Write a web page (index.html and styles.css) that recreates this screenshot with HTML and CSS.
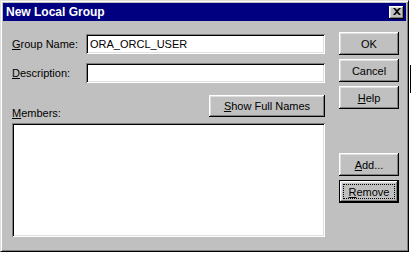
FILE: index.html
```html
<!DOCTYPE html>
<html lang="en">
<head>
  <meta charset="UTF-8">
  <meta name="viewport" content="width=device-width, initial-scale=1.0">
  <title>New Local Group</title>
  <link rel="stylesheet" href="styles.css">
</head>
<body>
  <!-- window behind the dialog, only its edge shows -->
  <div class="behind-edge"></div>

  <div class="window">
    <div class="titlebar">
      <span class="title">New Local Group</span>
      <button class="close-btn" aria-label="Close">
        <svg width="8" height="7" viewBox="0 0 8 7">
          <path d="M0 0h2l2 2 2-2h2L5 3.5 8 7H6L4 5 2 7H0l3-3.5z" fill="#000"/>
        </svg>
      </button>
    </div>

    <div class="dialog-body">
      <div class="main-col">
        <div class="field">
          <label><u>G</u>roup Name:</label>
          <div class="input">ORA_ORCL_USER</div>
        </div>
        <div class="field field-second">
          <label><u>D</u>escription:</label>
          <div class="input"></div>
        </div>
        <div class="members-row">
          <label class="members-label"><u>M</u>embers:</label>
          <button class="btn btn-wide"><u>S</u>how Full Names</button>
        </div>
        <div class="list-box"></div>
      </div>

      <div class="side-col">
        <button class="btn">OK</button>
        <button class="btn">Cancel</button>
        <button class="btn"><u>H</u>elp</button>
        <button class="btn btn-add"><u>A</u>dd...</button>
        <button class="btn btn-default"><span class="focus-ring"><u>R</u>emove</span></button>
      </div>
    </div>
  </div>
</body>
</html>
```

FILE: styles.css
```css
body {
  margin: 0;
  padding: 0;
  background: #ffffff;
  font-family: "Liberation Sans", Arial, sans-serif;
  font-size: 11px;
  color: #000;
  position: relative;
  width: 412px;
  height: 253px;
  overflow: hidden;
}

.behind-edge {
  position: absolute;
  left: 410px;
  top: 65px;
  width: 1px;
  height: 28px;
  background: #000;
}

/* 对话框外框 */
.window {
  box-sizing: border-box;
  width: 409px;
  height: 252px;
  background: #c0c0c0;
  border: 1px solid;
  border-color: #dfdfdf #000 #000 #dfdfdf;
  box-shadow: inset 1px 1px #fff, inset -1px -1px #808080;
  padding: 2px;
  display: flex;
  flex-direction: column;
}

.titlebar {
  height: 18px;
  background: #000080;
  display: flex;
  align-items: center;
  justify-content: space-between;
  padding-left: 3px;
}

.title {
  color: #fff;
  font-weight: bold;
  font-size: 12px;
}

.close-btn {
  width: 15px;
  height: 13px;
  margin-right: 2px;
  padding: 0;
  border: 0;
  background: #c0c0c0;
  box-shadow: inset -1px -1px #000, inset 1px 1px #fff, inset -2px -2px #808080, inset 2px 2px #dfdfdf;
  display: flex;
  align-items: center;
  justify-content: center;
}

.close-btn svg {
  display: block;
  margin-top: -1px;
}

/* 内容区 */
.dialog-body {
  display: flex;
  gap: 14px;
  padding: 11px 7px 0 9px;
}

.main-col {
  width: 313px;
  padding-top: 2px;
  display: flex;
  flex-direction: column;
}

.field {
  height: 20px;
  display: flex;
  align-items: center;
}

.field-second {
  margin-top: 9px;
}

.field label {
  width: 74px;
}

.input {
  flex: 1;
  height: 20px;
  box-sizing: border-box;
  background: #fff;
  box-shadow: inset 1px 1px #808080, inset -1px -1px #fff, inset 2px 2px #000, inset -2px -2px #dfdfdf;
  padding: 0 4px;
  display: flex;
  align-items: center;
}

.members-row {
  margin-top: 12px;
  height: 25px;
  display: flex;
  justify-content: space-between;
}

.members-label {
  align-self: flex-end;
  line-height: 13px;
}

.list-box {
  margin-top: 3px;
  height: 114px;
  background: #fff;
  box-shadow: inset 1px 1px #808080, inset -1px -1px #fff, inset 2px 2px #000, inset -2px -2px #dfdfdf;
}

/* 按钮 */
.btn {
  box-sizing: border-box;
  height: 23px;
  padding: 0;
  border: 0;
  background: #c0c0c0;
  font-family: "Liberation Sans", Arial, sans-serif;
  font-size: 11px;
  color: #000;
  box-shadow: inset -1px -1px #000, inset 1px 1px #fff, inset -2px -2px #808080, inset 2px 2px #dfdfdf;
}

.btn-wide {
  width: 116px;
  height: 22px;
}

.side-col {
  width: 60px;
  display: flex;
  flex-direction: column;
  gap: 4px;
}

.btn-add {
  margin-top: 40px;
}

.btn-default {
  border: 1px solid #000;
  display: flex;
  align-items: center;
  justify-content: center;
}

.focus-ring {
  box-sizing: border-box;
  width: 52px;
  height: 15px;
  border: 1px dotted #000;
  display: flex;
  align-items: center;
  justify-content: center;
}
```
